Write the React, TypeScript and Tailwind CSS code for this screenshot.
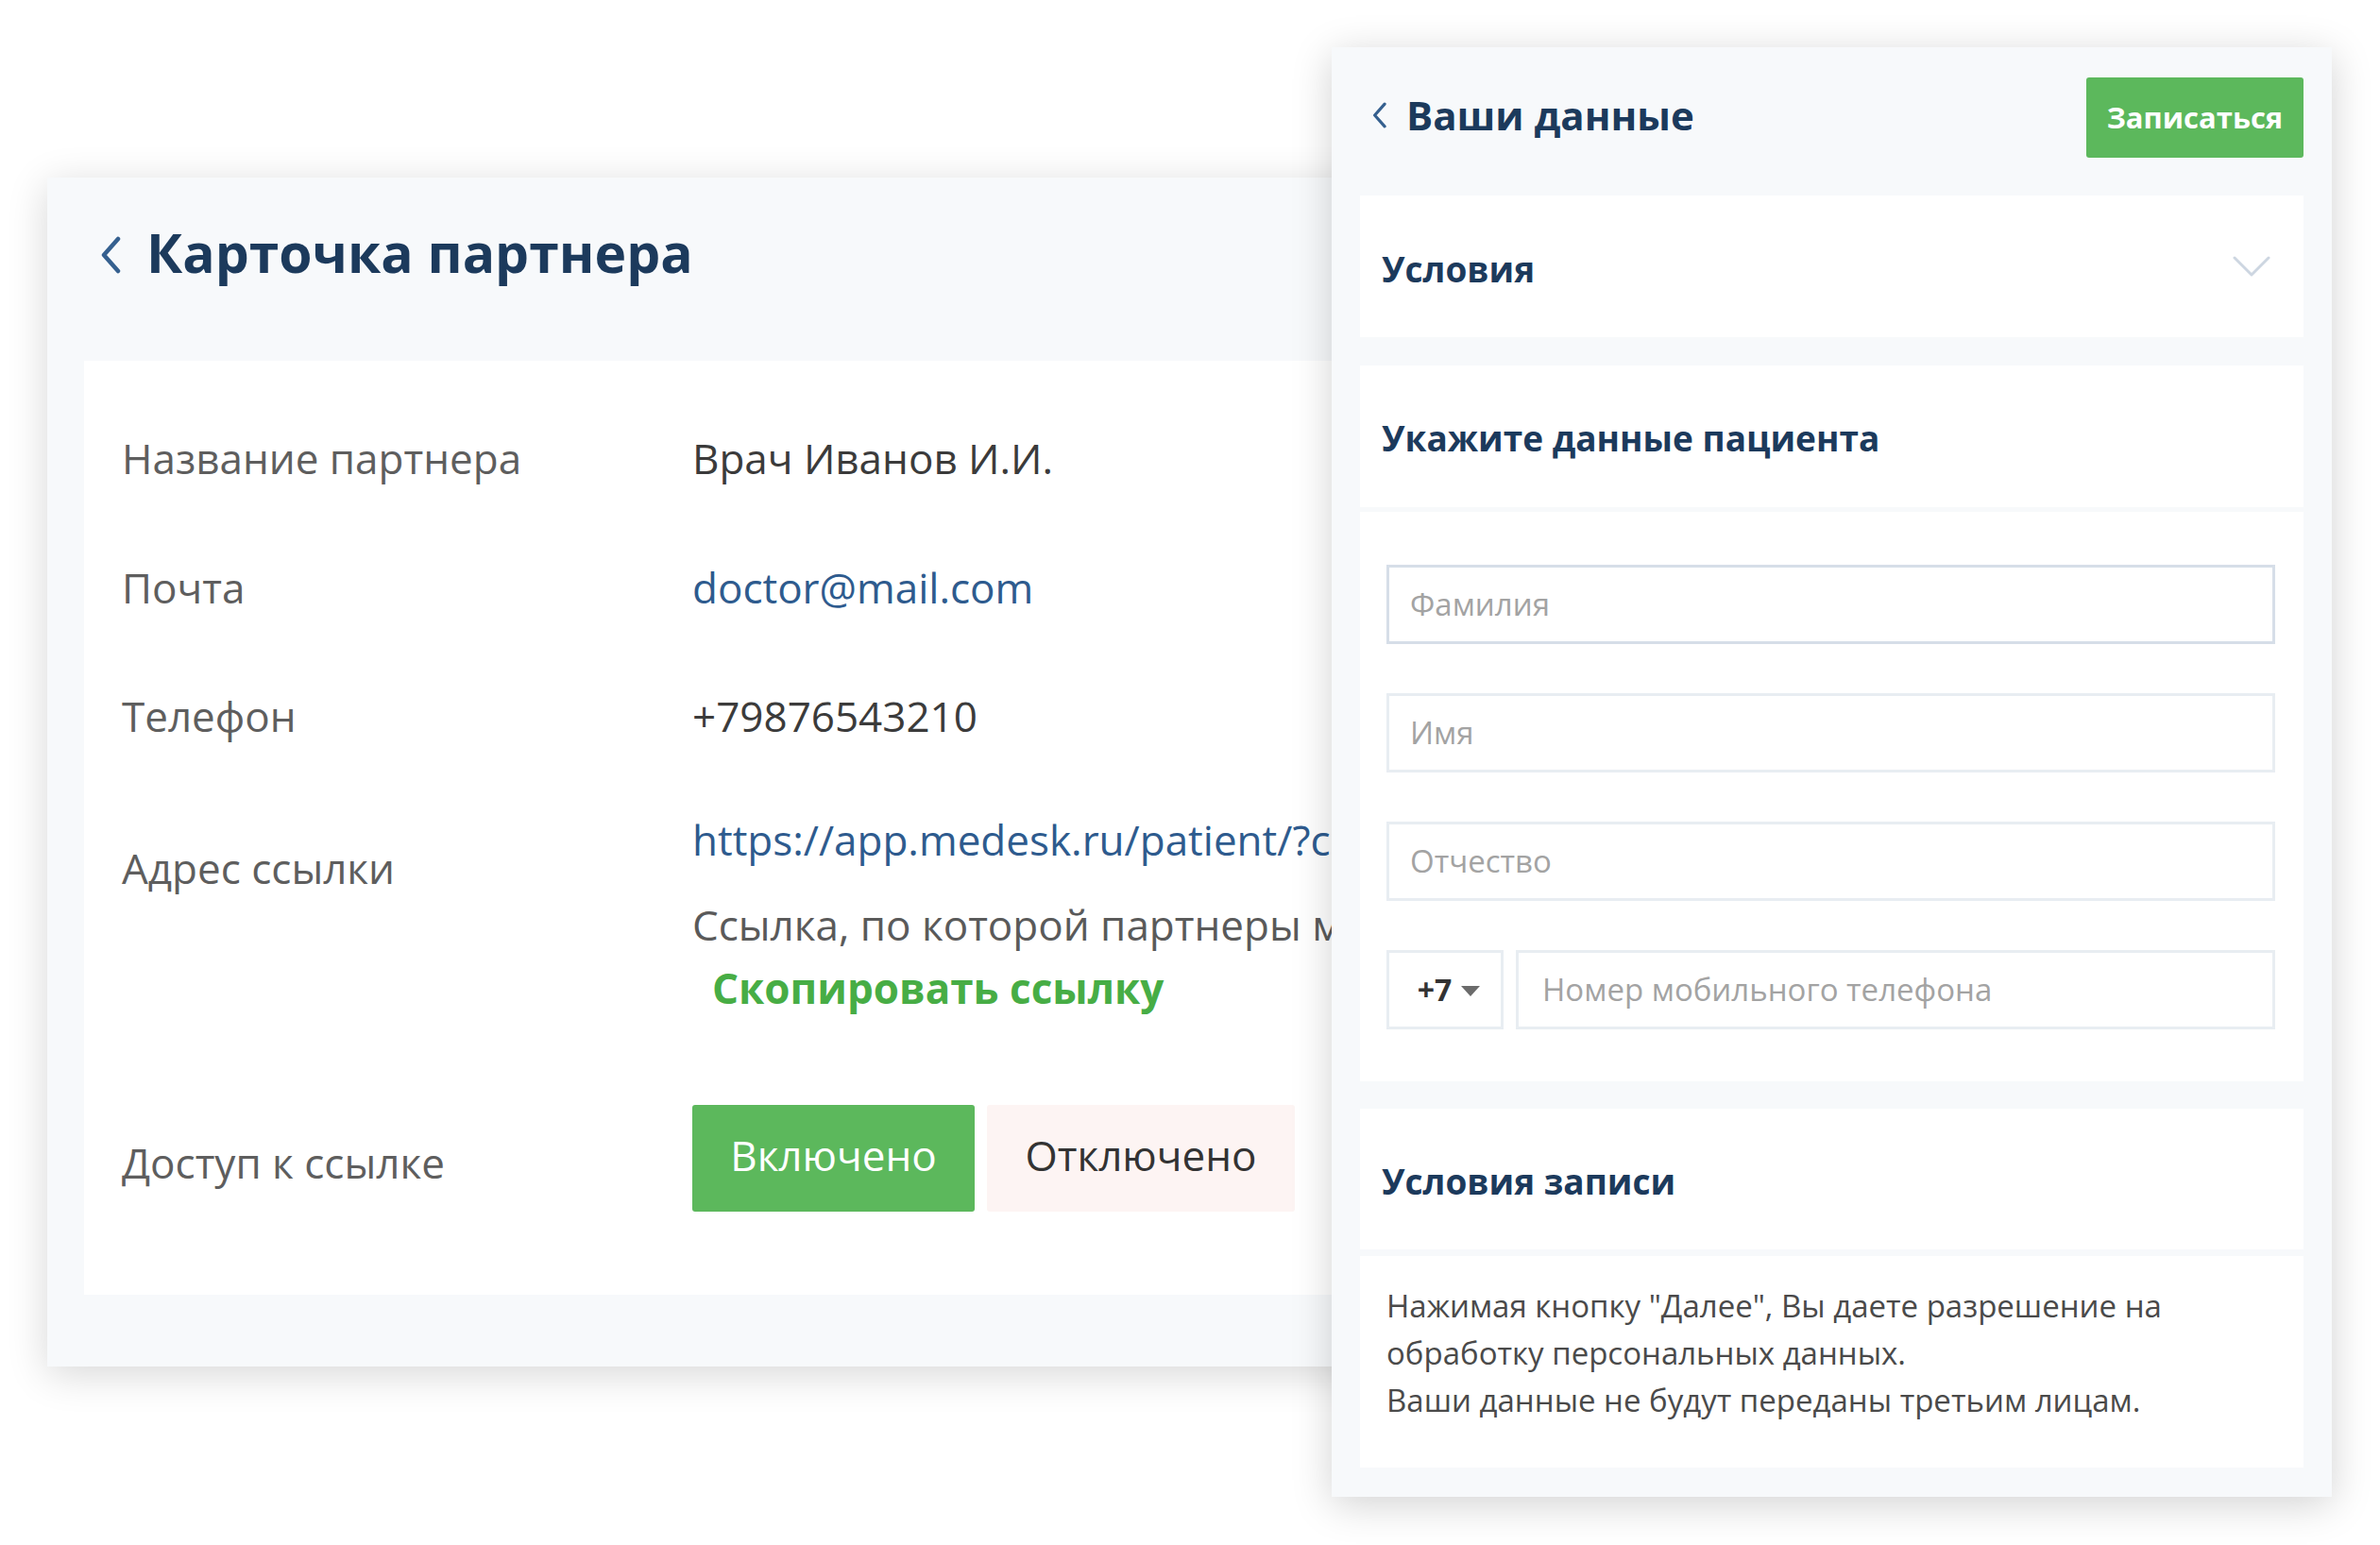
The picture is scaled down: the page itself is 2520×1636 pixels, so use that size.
const font = { fontFamily: '"Open Sans", "Noto Sans", sans-serif' };

function ChevronLeft({ className }: { className?: string }) {
  return (
    <svg viewBox="0 0 24 40" className={className} fill="none">
      <polyline
        points="20,3 5,20 20,37"
        stroke="currentColor"
        strokeWidth="4.5"
        strokeLinecap="round"
        strokeLinejoin="round"
      />
    </svg>
  );
}

function ChevronDown() {
  return (
    <svg viewBox="0 0 40 24" className="h-[24px] w-[40px] text-[#cdd6e1]" fill="none">
      <polyline
        points="2,3 20,21 38,3"
        stroke="currentColor"
        strokeWidth="3"
        strokeLinecap="round"
        strokeLinejoin="round"
      />
    </svg>
  );
}

function Row({
  label,
  children,
  className,
}: {
  label: string;
  children: React.ReactNode;
  className?: string;
}) {
  return (
    <div className={`flex ${className ?? ''}`}>
      <div className="w-[604px] shrink-0 text-[44px] leading-[60px] text-[#5e5e5e]">
        {label}
      </div>
      <div className="text-[44px] leading-[60px] text-[#3b3b3b] whitespace-nowrap">
        {children}
      </div>
    </div>
  );
}

function PartnerCard() {
  return (
    <div className="mt-[188px] h-[1259px] w-[1410px] shrink-0 overflow-hidden bg-[#f7f9fb] shadow-[0_8px_40px_rgba(0,0,0,0.16)]">
      {/* Header */}
      <div className="flex h-[194px] items-start gap-[26px] pl-[55px] pt-[44px]">
        <ChevronLeft className="mt-[18px] h-[40px] w-[24px] text-[#35608f]" />
        <h1 className="text-[57px] font-bold leading-[70px] text-[#1c3a5c]">
          Карточка партнера
        </h1>
      </div>

      {/* Content */}
      <div className="ml-[39px] h-[989px] bg-white pl-[40px] pt-[35px]">
        <Row label="Название партнера" className="h-[136px] items-center">
          Врач Иванов И.И.
        </Row>
        <Row label="Почта" className="h-[137px] items-center">
          <span className="text-[#2e5b8e]">doctor@mail.com</span>
        </Row>
        <Row label="Телефон" className="h-[135px] items-center">
          +79876543210
        </Row>

        <div className="flex h-[290px]">
          <div className="w-[604px] shrink-0 pt-[64px] text-[44px] leading-[60px] text-[#5e5e5e]">
            Адрес ссылки
          </div>
          <div className="flex flex-col whitespace-nowrap pt-[34px] text-[44px] leading-[60px]">
            <span className="text-[#2e5b8e]">https://app.medesk.ru/patient/?code=partner</span>
            <span className="mt-[30px] text-[#5a5a5a]">
              Ссылка, по которой партнеры могут записывать пациентов
            </span>
            <button className="mt-[7px] self-start pl-[21px] font-bold text-[#47ad45]">
              Скопировать ссылку
            </button>
          </div>
        </div>

        <div className="flex items-center pt-[55px]">
          <div className="w-[604px] shrink-0 pt-[8px] text-[44px] leading-[60px] text-[#5e5e5e]">
            Доступ к ссылке
          </div>
          <div className="flex gap-[13px] text-[44px]">
            <button className="h-[113px] w-[299px] rounded-[3px] bg-[#5cb85c] pb-[8px] text-white">
              Включено
            </button>
            <button className="h-[113px] w-[326px] rounded-[3px] bg-[#fdf4f3] pb-[8px] text-[#333]">
              Отключено
            </button>
          </div>
        </div>
      </div>
    </div>
  );
}

function Input({ placeholder, focused }: { placeholder: string; focused?: boolean }) {
  return (
    <div
      className={`flex h-[84px] items-center border-[3px] bg-white pl-[22px] text-[33px] text-[#a3a3a3] ${
        focused ? 'border-[#d6dee8]' : 'border-[#e8edf2]'
      }`}
    >
      {placeholder}
    </div>
  );
}

function BookingPanel() {
  return (
    <div className="relative z-10 ml-[-50px] mt-[50px] h-[1535px] w-[1059px] shrink-0 bg-[#f7f9fb] px-[30px] pb-[32px] shadow-[0_8px_40px_rgba(0,0,0,0.18)]">
      {/* Header */}
      <div className="flex items-center justify-between pt-[32px]">
        <div className="mb-[6px] flex items-center gap-[20px] pl-[12px]">
          <ChevronLeft className="h-[28px] w-[17px] text-[#35608f]" />
          <h2 className="text-[42px] font-bold leading-[56px] text-[#1c3a5c]">Ваши данные</h2>
        </div>
        <button className="h-[85px] w-[230px] rounded-[3px] bg-[#5cb85c] text-[31px] font-bold text-white">
          Записаться
        </button>
      </div>

      {/* Условия */}
      <div className="mt-[40px] flex h-[150px] items-center justify-between bg-white pl-[23px] pr-[35px]">
        <span className="mt-[5px] text-[37px] font-bold text-[#1c3a5c]">Условия</span>
        <ChevronDown />
      </div>

      {/* Patient data */}
      <div className="mt-[30px]">
        <div className="flex h-[150px] items-center bg-white pl-[23px]">
          <span className="mt-[4px] text-[37px] font-bold text-[#1c3a5c]">
            Укажите данные пациента
          </span>
        </div>
        <div className="mt-[5px] flex flex-col gap-[52px] bg-white pb-[55px] pl-[28px] pr-[30px] pt-[56px]">
          <Input placeholder="Фамилия" focused />
          <Input placeholder="Имя" />
          <Input placeholder="Отчество" />
          <div className="flex gap-[13px]">
            <div className="flex h-[84px] w-[124px] shrink-0 items-center justify-center gap-[10px] border-[3px] border-[#e8edf2] bg-white pl-[8px]">
              <span className="text-[32px] font-bold text-[#333]">+7</span>
              <span className="mt-[2px] h-0 w-0 border-x-[10px] border-t-[11px] border-x-transparent border-t-[#6b6b6b]" />
            </div>
            <div className="flex h-[84px] flex-1 items-center border-[3px] border-[#e8edf2] bg-white pl-[25px] text-[33px] text-[#a3a3a3]">
              Номер мобильного телефона
            </div>
          </div>
        </div>
      </div>

      {/* Условия записи */}
      <div className="mt-[29px]">
        <div className="flex h-[149px] items-center bg-white pl-[23px]">
          <span className="mt-[4px] text-[37px] font-bold text-[#1c3a5c]">Условия записи</span>
        </div>
        <div className="mt-[7px] h-[224px] bg-white pl-[28px] pr-[28px] pt-[28px] text-[33px] leading-[50px] text-[#4a4a4a]">
          Нажимая кнопку "Далее", Вы даете разрешение на обработку персональных данных.
          <br />
          Ваши данные не будут переданы третьим лицам.
        </div>
      </div>
    </div>
  );
}

export default function App() {
  return (
    <div className="h-[1636px] w-[2520px] overflow-hidden bg-white" style={font}>
      <div className="flex items-start pl-[50px]">
        <PartnerCard />
        <BookingPanel />
      </div>
    </div>
  );
}
